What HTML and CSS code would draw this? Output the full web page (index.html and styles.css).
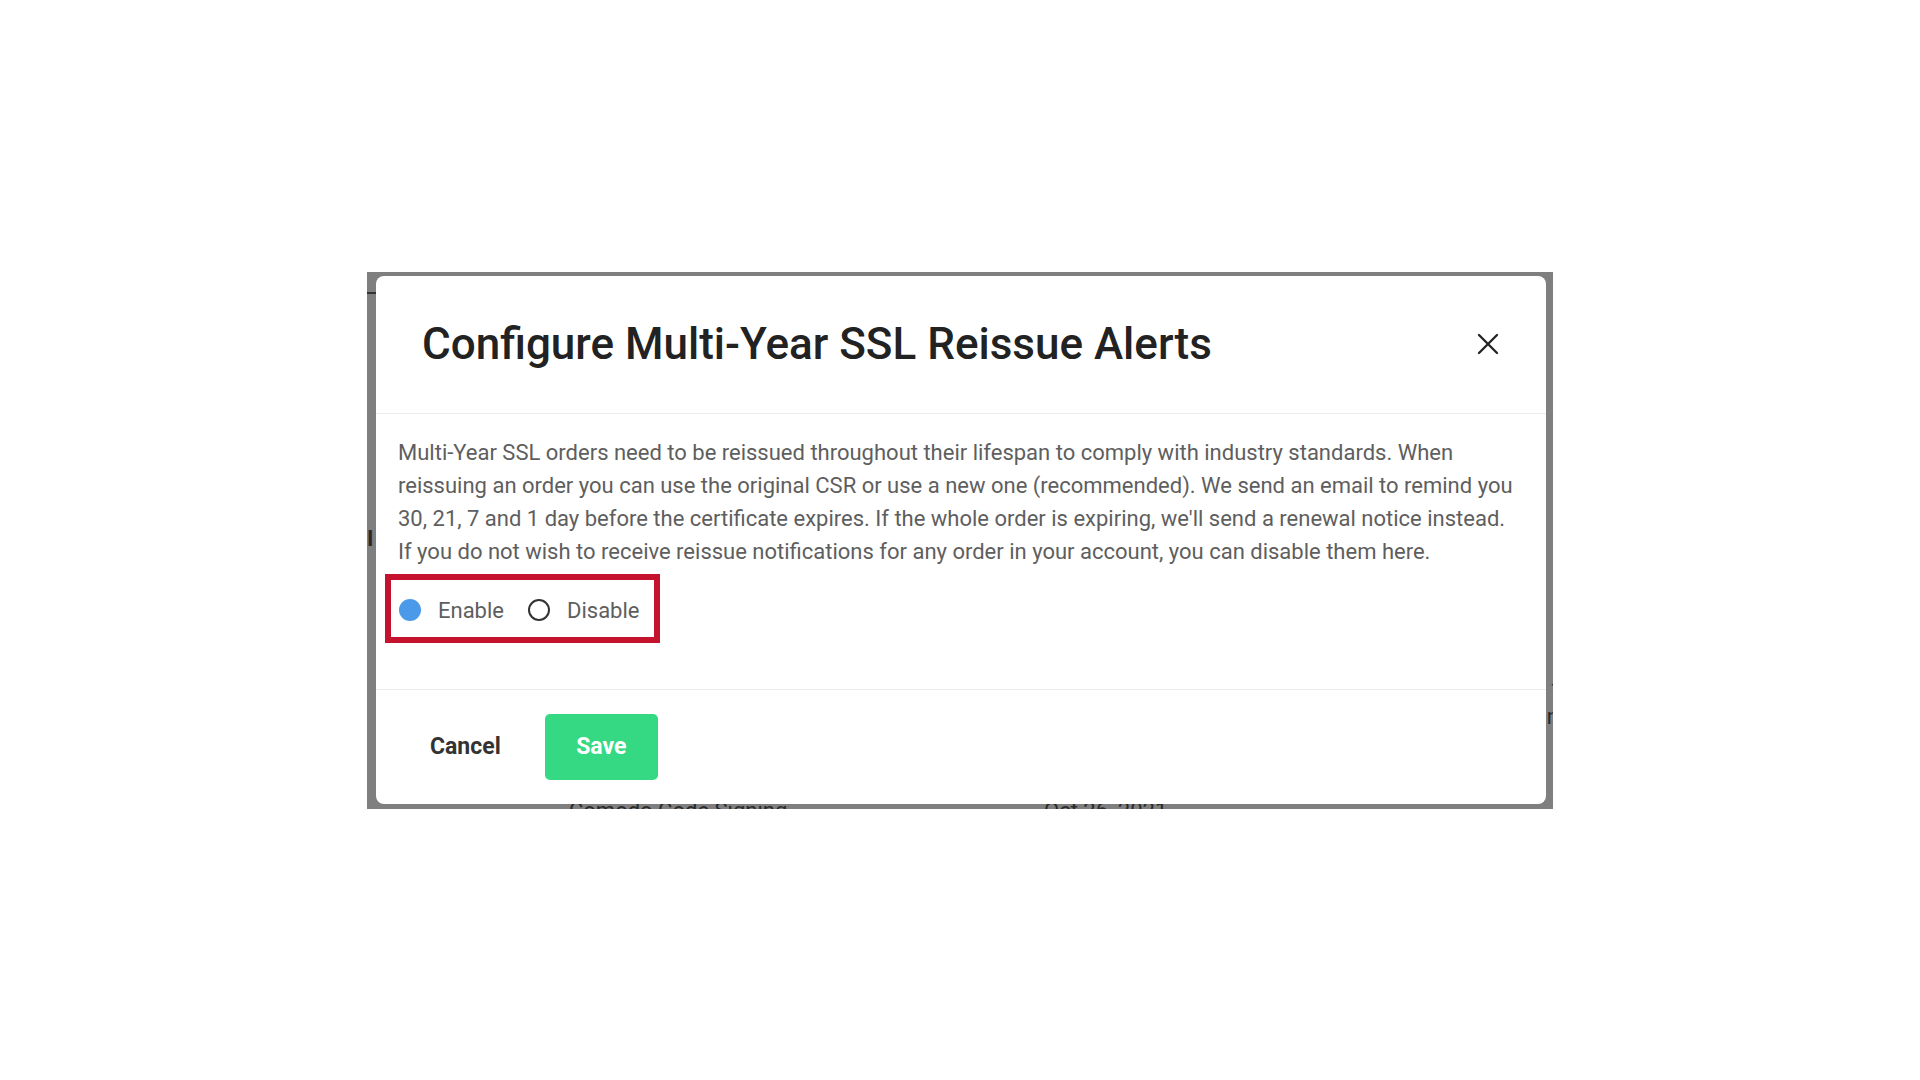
FILE: index.html
```html
<!DOCTYPE html>
<html lang="en">
<head>
<meta charset="utf-8">
<title>Configure Multi-Year SSL Reissue Alerts</title>
<link rel="stylesheet" href="styles.css">
</head>
<body>
  <div class="frame">
    <div class="behind">
      <span class="frag frag-line"></span>
      <span class="frag frag-left">I</span>
      <span class="frag frag-r1">t</span>
      <span class="frag frag-r2">n</span>
      <span class="frag frag-product">Comodo Code Signing</span>
      <span class="frag frag-date">Oct 26, 2021</span>
    </div>
    <div class="dialog">
      <div class="dialog-header">
        <h1 class="dialog-title">Configure Multi-Year SSL Reissue Alerts</h1>
        <button class="close" aria-label="Close">
          <svg width="22" height="22" viewBox="0 0 22 22"><path d="M2 2 L20 20 M20 2 L2 20" stroke="#222" stroke-width="2.3" stroke-linecap="round" fill="none"/></svg>
        </button>
      </div>
      <div class="dialog-body">
        <p class="desc">Multi-Year SSL orders need to be reissued throughout their lifespan to comply with industry standards. When reissuing an order you can use the original CSR or use a new one (recommended). We send an email to remind you 30, 21, 7 and 1 day before the certificate expires. If the whole order is expiring, we'll send a renewal notice instead. If you do not wish to receive reissue notifications for any order in your account, you can disable them here.</p>
        <div class="radio-group">
          <label class="radio-item"><input type="radio" name="alerts" class="radio" checked><span class="radio-label">Enable</span></label>
          <label class="radio-item"><input type="radio" name="alerts" class="radio"><span class="radio-label">Disable</span></label>
        </div>
      </div>
      <div class="dialog-footer">
        <button class="btn btn-cancel">Cancel</button>
        <button class="btn btn-save">Save</button>
      </div>
    </div>
  </div>
</body>
</html>
```
FILE: styles.css
```css
html, body {
  margin: 0;
  padding: 0;
  background: #ffffff;
}
body {
  width: 1920px;
  height: 1080px;
  display: flex;
  align-items: center;
  justify-content: center;
  font-family: Roboto, "Liberation Sans", Arial, sans-serif;
}
.frame {
  position: relative;
  overflow: hidden;
  background: #7f7f7f;
  padding: 4px 7px 5px 9px;
}
.behind {
  position: absolute;
  inset: 0;
  color: #2a2a2a;
  font-size: 22px;
  line-height: 22px;
}
.frag {
  position: absolute;
}
.frag-line {
  left: 0;
  top: 20px;
  width: 9px;
  height: 2px;
  background: #333;
}
.frag-left { left: 0; top: 256px; font-weight: 700; }
.frag-r1 { right: -6px; top: 406px; }
.frag-r2 { right: -6px; top: 434px; }
.frag-product { left: 202px; top: 528px; }
.frag-date { left: 677px; top: 528px; }
.dialog {
  position: relative;
  z-index: 1;
  width: 1170px;
  background: #ffffff;
  border-radius: 8px;
  display: flex;
  flex-direction: column;
}
.dialog-header {
  height: 138px;
  box-sizing: border-box;
  border-bottom: 1px solid #ececec;
  display: flex;
  align-items: center;
  justify-content: space-between;
  padding: 0 47px 0 46px;
}
.dialog-title {
  margin: 0;
  font-size: 44px;
  font-weight: 500;
  color: #222222;
  letter-spacing: 0;
}
.close {
  border: 0;
  background: transparent;
  padding: 0;
  width: 22px;
  height: 22px;
  display: flex;
  cursor: pointer;
}
.dialog-body {
  padding: 22px 22px 46px 22px;
}
.desc {
  margin: 0;
  font-size: 22px;
  line-height: 33px;
  color: #5e5e5e;
}
.radio-group {
  display: inline-flex;
  align-items: center;
  margin: 6px 0 0 -13px;
  border: 6px solid #c5132f;
  padding: 14px 15px 10px 8px;
  gap: 24px;
}
.radio-item {
  display: inline-flex;
  align-items: center;
  gap: 17px;
  font-size: 22px;
  line-height: 33px;
  color: #5e5e5e;
}
.radio {
  appearance: none;
  -webkit-appearance: none;
  margin: 0;
  width: 22px;
  height: 22px;
  border-radius: 50%;
  border: 2px solid #333333;
  box-sizing: border-box;
  background: #fff;
}
.radio:checked {
  border: 0;
  background: #4a9ae9;
}
.dialog-footer {
  height: 114px;
  border-top: 1px solid #ececec;
  display: flex;
  align-items: center;
  padding-left: 38px;
  gap: 28px;
}
.btn {
  font-family: Roboto, "Liberation Sans", Arial, sans-serif;
  font-size: 23px;
  font-weight: 700;
  border: 0;
  border-radius: 5px;
  cursor: pointer;
}
.btn-cancel {
  background: transparent;
  color: #333333;
  padding: 0 16px;
  height: 66px;
}
.btn-save {
  background: #35d983;
  color: #ffffff;
  width: 113px;
  height: 66px;
}
```
